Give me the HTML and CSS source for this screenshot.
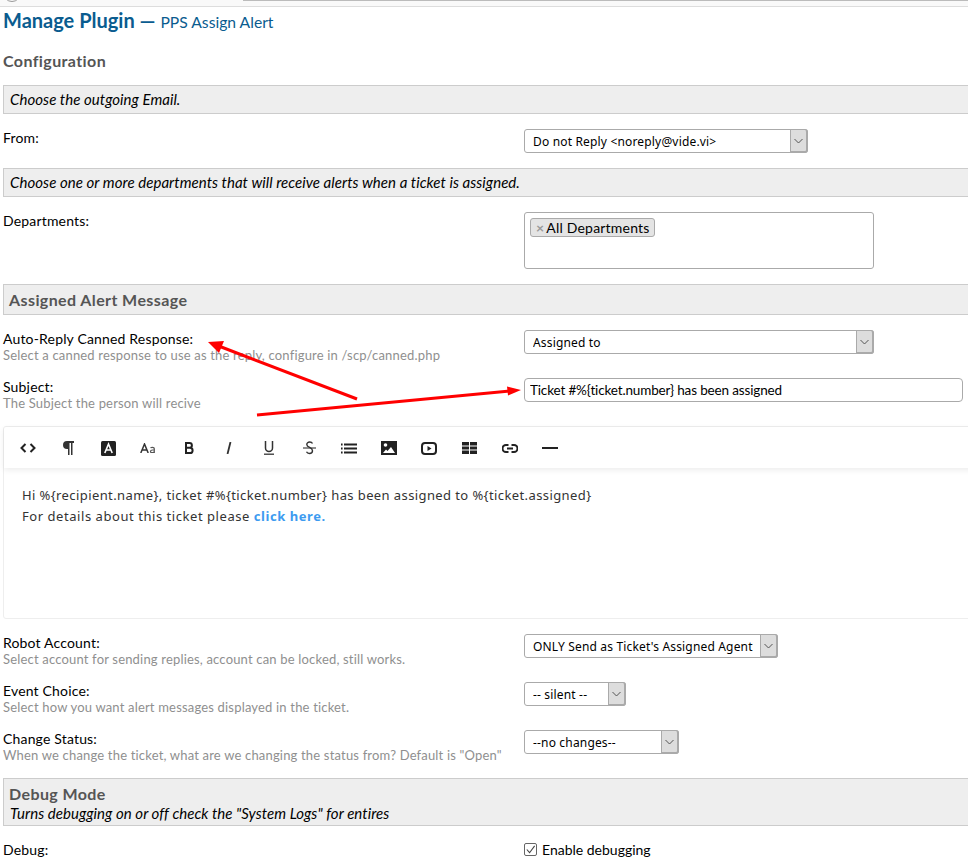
FILE: index.html
```html
<!DOCTYPE html>
<html>
<head lang="en">
    <meta charset="UTF-8">
    <title>Manage Plugin</title>
    <link rel="stylesheet" href="styles.css">
</head>
<body>
<div id="topbar">
    <span id="topcircle"></span>
    <span id="topfield"></span>
</div>
<div id="page">
    <h2 class="title">Manage Plugin <span class="dash">&mdash;</span> <small>PPS Assign Alert</small></h2>
    <h3 class="config">Configuration</h3>

    <div class="bar"><em>Choose the outgoing Email.</em></div>
    <div class="row row-end">
        <div class="label">From:</div>
        <div class="field">
            <div class="select" style="width: 284px">
                <select><option>Do not Reply &lt;noreply@vide.vi&gt;</option></select>
                <span class="select-btn"><svg width="9" height="6" viewBox="0 0 9 6"><path d="M.5 1l4 4 4-4" fill="none" stroke="#555" stroke-width="1"/></svg></span>
            </div>
        </div>
    </div>

    <div class="bar"><em>Choose one or more departments that will receive alerts when a ticket is assigned.</em></div>
    <div class="row row-end">
        <div class="label">Departments:</div>
        <div class="field">
            <div class="multi">
                <span class="tag"><span class="tag-x">&times;</span>All Departments</span>
            </div>
        </div>
    </div>

    <div class="bar bar-head"><h4>Assigned Alert Message</h4></div>
    <div class="row">
        <div class="label">Auto-Reply Canned Response:<div class="hint">Select a canned response to use as the reply, configure in /scp/canned.php</div></div>
        <div class="field">
            <div class="select" style="width: 350px">
                <select><option>Assigned to</option></select>
                <span class="select-btn"><svg width="9" height="6" viewBox="0 0 9 6"><path d="M.5 1l4 4 4-4" fill="none" stroke="#555" stroke-width="1"/></svg></span>
            </div>
        </div>
    </div>
    <div class="row">
        <div class="label">Subject:<div class="hint">The Subject the person will recive</div></div>
        <div class="field">
            <input class="subject" type="text" value="Ticket #%{ticket.number} has been assigned">
        </div>
    </div>

    <div class="editor-wrap">
        <div class="editor">
            <div class="toolbar">
                <span class="tool"><svg width="16" height="10" viewBox="0 0 16 10"><path d="M5.500 1L1.500 5l4 4M10.500 1l4 4-4 4" fill="none" stroke="#222" stroke-width="2"/></svg></span>
                <span class="tool"><svg width="11" height="14" viewBox="0 0 11 14"><path d="M4 0h7v2H9.500v12H8V2H6.500v12H5V8H4a4 4 0 0 1 0-8z" fill="#333"/></svg></span>
                <span class="tool"><svg width="15" height="15" viewBox="0 0 15 15"><rect width="15" height="15" rx="1.500" fill="#222"/><path d="M3.800 12L7.500 3l3.700 9M5.200 9h4.600" fill="none" stroke="#fff" stroke-width="1.600"/></svg></span>
                <span class="tool"><svg width="16" height="10" viewBox="0 0 16 10"><path d="M.8 10L4.500 1l3.700 9M2.200 7h4.600" fill="none" stroke="#333" stroke-width="1.500"/><path d="M10.500 4.800c.6-.4 1.200-.5 1.800-.5 1.200 0 2 .6 2 1.700V10M14.300 7h-1.800c-1.200 0-2 .5-2 1.400s.7 1.300 1.600 1.300c1 0 1.700-.5 2.200-1.200" fill="none" stroke="#555" stroke-width="1.200"/></svg></span>
                <span class="tool"><svg width="10" height="12" viewBox="0 0 10 12"><path d="M2 1h3.500a2.400 2.400 0 0 1 0 4.800H2zM2 5.800h4a2.600 2.600 0 0 1 0 5.200H2z" fill="none" stroke="#222" stroke-width="2"/></svg></span>
                <span class="tool"><svg width="6" height="12" viewBox="0 0 6 12"><path d="M4.500 0L1.500 12" fill="none" stroke="#333" stroke-width="1.800"/></svg></span>
                <span class="tool"><svg width="12" height="14" viewBox="0 0 12 14"><path d="M2.500 0v7a3.500 3.500 0 0 0 7 0V0" fill="none" stroke="#333" stroke-width="1.500"/><path d="M1 13.200h10" stroke="#333" stroke-width="1.300"/></svg></span>
                <span class="tool"><svg width="13" height="14" viewBox="0 0 13 14"><path d="M9.500 2.500C9 1.500 8 1 6.700 1 5 1 3.800 2 3.800 3.400c0 3.400 5.700 2.800 5.700 6.400 0 1.500-1.300 2.700-3 2.700-1.400 0-2.500-.6-3-1.700" fill="none" stroke="#333" stroke-width="1.400"/><path d="M0 7h13" stroke="#333" stroke-width="1.100"/></svg></span>
                <span class="tool"><svg width="16" height="11" viewBox="0 0 16 11"><path d="M3 1.500h13M3 5.500h13M3 9.500h13" stroke="#222" stroke-width="2"/><path d="M0 1.500h1.600M0 5.500h1.600M0 9.500h1.600" stroke="#222" stroke-width="2"/></svg></span>
                <span class="tool"><svg width="16" height="14" viewBox="0 0 16 14"><rect width="16" height="14" fill="#222"/><circle cx="4.500" cy="4" r="1.800" fill="#fff"/><path d="M2 12l3-3.500 1.500 1.500L10 6l4 6z" fill="#fff"/></svg></span>
                <span class="tool"><svg width="16" height="13" viewBox="0 0 16 13"><rect x="1" y="1" width="14" height="11" rx="3" fill="none" stroke="#222" stroke-width="2"/><path d="M6.500 4v5l4-2.500z" fill="#222"/></svg></span>
                <span class="tool"><svg width="15" height="12" viewBox="0 0 15 12"><path d="M0 0h7v3.500H0zM8 0h7v3.500H8zM0 4.500h7v3H0zM8 4.500h7v3H8zM0 8.500h7V12H0zM8 8.500h7V12H8z" fill="#222"/></svg></span>
                <span class="tool"><svg width="16" height="9" viewBox="0 0 16 9"><path d="M6.500 1H4a3.500 3.500 0 0 0 0 7h2.500M9.500 1H12a3.500 3.500 0 0 1 0 7H9.500M5 4.500h6" fill="none" stroke="#222" stroke-width="2"/></svg></span>
                <span class="tool"><svg width="16" height="2" viewBox="0 0 16 2"><path d="M0 1h16" stroke="#222" stroke-width="2"/></svg></span>
            </div>
            <div class="editor-body">
                <p class="line-vars">Hi %{recipient.name}, ticket #%{ticket.number} has been assigned to %{ticket.assigned}</p>
                <p>For details about this ticket please <a href="#">click here.</a></p>
            </div>
        </div>
    </div>

    <div class="row">
        <div class="label">Robot Account:<div class="hint">Select account for sending replies, account can be locked, still works.</div></div>
        <div class="field">
            <div class="select" style="width: 254px">
                <select><option>ONLY Send as Ticket's Assigned Agent</option></select>
                <span class="select-btn"><svg width="9" height="6" viewBox="0 0 9 6"><path d="M.5 1l4 4 4-4" fill="none" stroke="#555" stroke-width="1"/></svg></span>
            </div>
        </div>
    </div>
    <div class="row">
        <div class="label">Event Choice:<div class="hint">Select how you want alert messages displayed in the ticket.</div></div>
        <div class="field">
            <div class="select" style="width: 102px">
                <select><option>-- silent --</option></select>
                <span class="select-btn"><svg width="9" height="6" viewBox="0 0 9 6"><path d="M.5 1l4 4 4-4" fill="none" stroke="#555" stroke-width="1"/></svg></span>
            </div>
        </div>
    </div>
    <div class="row row-end">
        <div class="label">Change Status:<div class="hint">When we change the ticket, what are we changing the status from? Default is "Open"</div></div>
        <div class="field">
            <div class="select" style="width: 155px">
                <select><option>--no changes--</option></select>
                <span class="select-btn"><svg width="9" height="6" viewBox="0 0 9 6"><path d="M.5 1l4 4 4-4" fill="none" stroke="#555" stroke-width="1"/></svg></span>
            </div>
        </div>
    </div>

    <div class="bar bar-debug">
        <h4>Debug Mode</h4>
        <em>Turns debugging on or off check the "System Logs" for entires</em>
    </div>
    <div class="row">
        <div class="label">Debug:</div>
        <div class="field">
            <label class="check"><span class="box"><svg width="11" height="11" viewBox="0 0 12 12"><path d="M2 6l3 3.500L10.500 2" fill="none" stroke="#444" stroke-width="1.200"/></svg></span>Enable debugging</label>
        </div>
    </div>
</div>
<!-- annotation arrows drawn over the screenshot -->
<svg id="arrows" width="968" height="865" viewBox="0 0 968 865">
    <path d="M357 399L220 346.500" stroke="#f00" stroke-width="3" fill="none"/>
    <path d="M208 342L224 341L219 353z" fill="#f00"/>
    <path d="M257 415L510 391" stroke="#f00" stroke-width="3" fill="none"/>
    <path d="M521 390L507 386.500L508 395.500z" fill="#f00"/>
</svg>
</body>
</html>
```

FILE: styles.css
```css
* {
    margin: 0;
    padding: 0;
    box-sizing: border-box;
}
html, body {
    overflow: hidden;
    height: 865px;
}
body {
    position: relative;
    background: #fff;
    font-family: Lato, "Liberation Sans", sans-serif;
    font-size: 14px;
    color: #000;
}
#topbar {
    height: 7px;
    background: #f9f9f9;
    border-bottom: 1px solid #ddd;
    display: flex;
    overflow: hidden;
}
#topcircle {
    width: 18px;
    height: 18px;
    margin: -16px 0 0 3px;
    border: 1px solid #999;
    border-radius: 50%;
}
#topfield {
    height: 1px;
    margin-left: 222px;
    flex: 1;
    background: #bbb;
}
#page {
    width: 1000px;
    padding-left: 3px;
}
.title {
    height: 39px;
    font-size: 20px;
    line-height: 27px;
    font-weight: 700;
    color: #0a5c8f;
}
.title small {
    font-size: 15.700px;
    font-weight: 400;
}
.config {
    height: 39px;
    padding-top: 5px;
    font-size: 16px;
    letter-spacing: .4px;
    line-height: 20px;
    font-weight: 700;
    color: #555;
}
.bar {
    background: #eee;
    border: 1px solid #ccc;
    padding: 0 6px;
    height: 29px;
    font-size: 15px;
    letter-spacing: .05px;
    line-height: 27px;
}
.bar-head {
    height: 31px;
}
.bar h4 {
    margin-left: -1px;
    font-size: 16px;
    letter-spacing: .4px;
    line-height: 29px;
    font-weight: 700;
    color: #555;
}
.bar-debug {
    height: 48px;
    line-height: 16px;
    padding-top: 7px;
}
.bar-debug h4 {
    line-height: 16px;
    margin-bottom: 3px;
}
.row {
    display: grid;
    grid-template-columns: 521px 1fr;
    padding-top: 15px;
}
.row-end {
    padding-bottom: 15px;
}
.label {
    padding-top: 1px;
    letter-spacing: .17px;
    line-height: 16px;
}
.hint {
    font-size: 13px;
    letter-spacing: .18px;
    line-height: 16px;
    color: #8f8f8f;
}
.select {
    position: relative;
    height: 24px;
}
.select select {
    width: 100%;
    height: 24px;
    padding: 1px 0 0 8px;
    appearance: none;
    background: #fff;
    border: 1px solid #aaa;
    border-radius: 3px;
    font-family: "Noto Sans", sans-serif;
    font-size: 12px;
    letter-spacing: .17px;
    color: #000;
}
.select-btn {
    position: absolute;
    top: 0;
    right: 0;
    width: 18px;
    height: 24px;
    display: flex;
    align-items: center;
    justify-content: center;
    background: #ddd;
    border: 1px solid #aaa;
    border-width: 1px 2px 2px 1px;
    border-radius: 0 3px 3px 0;
}
.multi {
    width: 350px;
    height: 57px;
    padding: 5px;
    border: 1px solid #aaa;
    border-radius: 3px;
}
.tag {
    display: inline-block;
    height: 19px;
    padding: 0 4px 0 5px;
    letter-spacing: .2px;
    line-height: 17px;
    background: #e4e4e4;
    border: 1px solid #aaa;
    border-radius: 3px;
}
.tag-x {
    margin-right: 2px;
    color: #999;
    font-weight: 700;
}
.subject {
    display: block;
    width: 439px;
    height: 24px;
    padding: 0 5px;
    border: 1px solid #aaa;
    border-radius: 4px;
    font-family: Lato, sans-serif;
    font-size: 13.500px;
    letter-spacing: -.15px;
    color: #000;
}
.editor-wrap {
    padding-top: 15px;
}
.editor {
    height: 193px;
    width: 980px;
    border: 1px solid #eee;
    border-radius: 3px;
}
.toolbar {
    height: 41px;
    padding: 1px 0 0 4px;
    display: flex;
    align-items: center;
    box-shadow: 0 2px 6px rgba(0, 0, 0, .08);
}
.tool {
    width: 40.150px;
    display: flex;
    justify-content: center;
    align-items: center;
}
.editor-body {
    padding: 17px 18px;
    font-family: "Noto Sans", sans-serif;
    font-size: 13px;
    line-height: 21px;
    letter-spacing: .55px;
    color: #333;
}
.line-vars {
    letter-spacing: .4px;
}
.editor-body a {
    color: #3d9bf0;
    font-weight: 700;
    text-decoration: none;
}
.check {
    display: flex;
    align-items: center;
    height: 16px;
}
.box {
    width: 13px;
    height: 13px;
    margin: 1px 5px 0 0;
    border: 1px solid #666;
    border-radius: 2px;
    display: flex;
    align-items: center;
    justify-content: center;
}
#arrows {
    position: absolute;
    top: 0;
    left: 0;
    pointer-events: none;
}
```
